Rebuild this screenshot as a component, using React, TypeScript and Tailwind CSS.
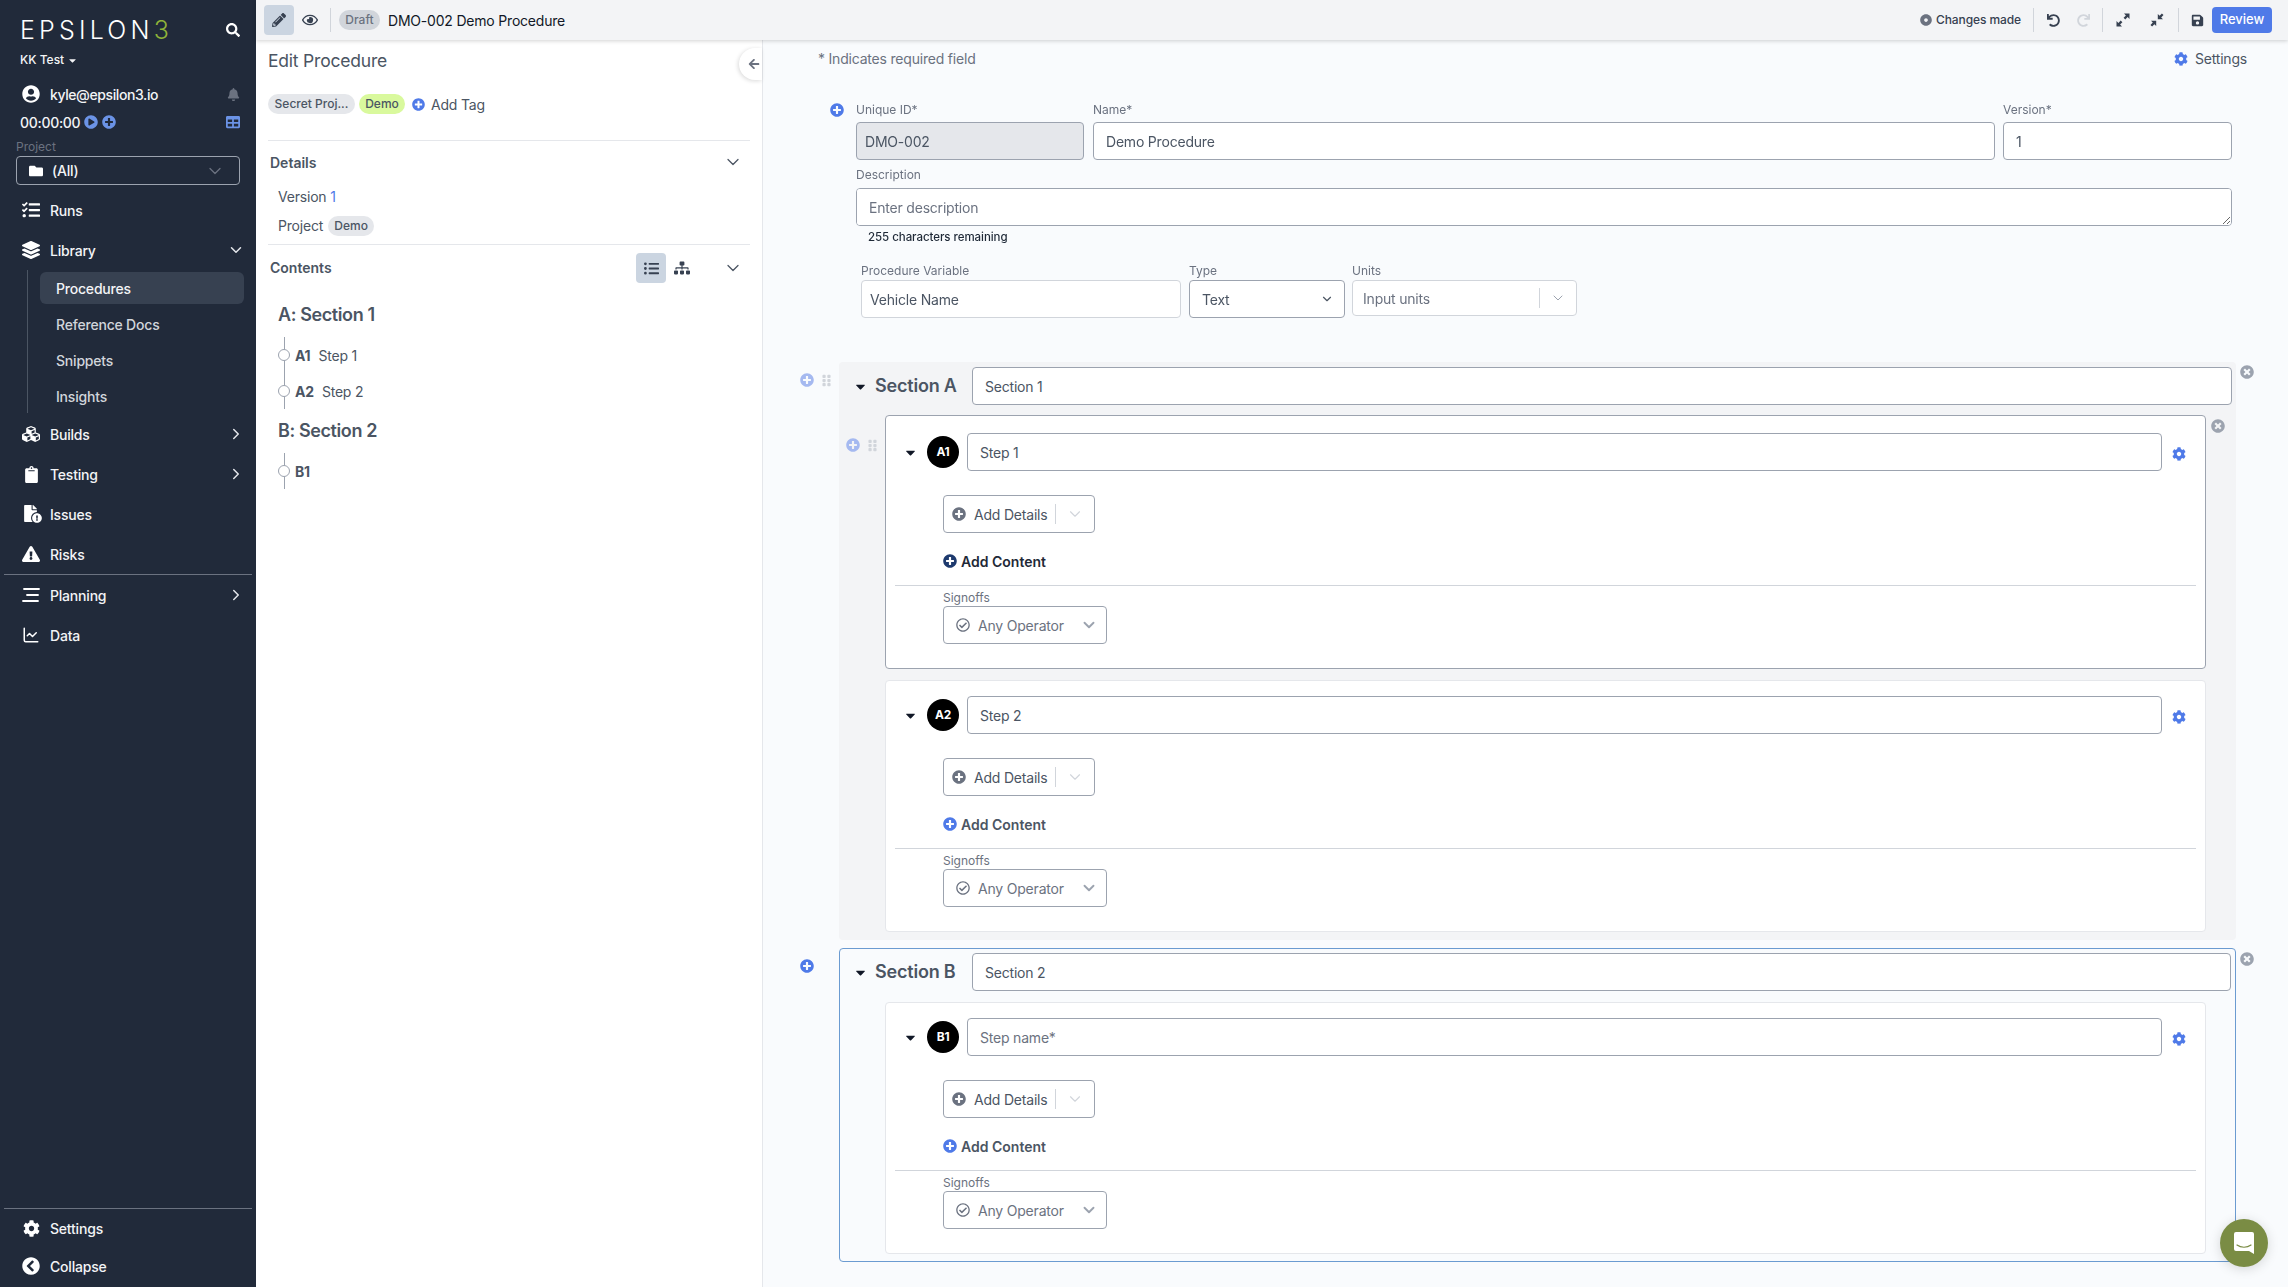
import React from "react";
import {
  FaSearch, FaCaretDown, FaUserCircle, FaBell, FaPlayCircle, FaPlusCircle, FaTable, FaFolder, FaTasks, FaLayerGroup,
  FaCubes, FaClipboard, FaFile, FaExclamationCircle, FaExclamationTriangle, FaCog,
  FaChevronCircleLeft, FaPencilAlt, FaRegEye, FaDotCircle, FaUndo, FaRedo,
  FaSave, FaArrowLeft, FaListUl, FaSitemap, FaTimesCircle, FaGripVertical, FaRegCheckCircle,
} from "react-icons/fa";
import { ChevronDown, ChevronRight, ChartLine } from "lucide-react";

function NavItem({ icon, label, chevron, short }: { icon: React.ReactNode; label: string; chevron?: "down" | "right"; short?: boolean }) {
  return (
    <div className={`flex items-center pl-[22px] pr-[11px] text-[14px] font-medium text-[#f3f4f6] ${short ? "h-[38px]" : "h-[40px]"}`}>
      <span className="flex w-[18px] justify-center text-[18px] text-white">{icon}</span>
      <span className="ml-[10px] flex-1">{label}</span>
      {chevron === "down" && <ChevronDown size={18} strokeWidth={2} className="text-[#e5e7eb]" />}
      {chevron === "right" && <ChevronRight size={18} strokeWidth={2} className="text-[#e5e7eb]" />}
    </div>
  );
}

function PlanningIcon() {
  return (
    <svg width="18" height="16" viewBox="0 0 18 16" stroke="#fff" strokeWidth="1.8" strokeLinecap="round">
      <line x1="2" y1="2" x2="17" y2="2" />
      <line x1="5" y1="8" x2="16" y2="8" />
      <line x1="1" y1="14" x2="16" y2="14" />
    </svg>
  );
}

function ExpandIcon() {
  return (
    <svg width="14" height="14" viewBox="0 0 14 14" fill="#374151">
      <path d="M8 .5h5.5V6l-1.9-1.9-2.3 2.3-1.7-1.7 2.3-2.3z" />
      <path d="M6 13.5H.5V8l1.9 1.9 2.3-2.3 1.7 1.7-2.3 2.3z" />
    </svg>
  );
}

function CompressIcon() {
  return (
    <svg width="14" height="14" viewBox="0 0 14 14" fill="#374151">
      <path d="M7.8 6.2V1l1.8 1.8L11.9.5l1.6 1.6-2.3 2.3L13 6.2z" />
      <path d="M6.2 7.8V13l-1.8-1.8-2.3 2.3-1.6-1.6 2.3-2.3L1 7.8z" />
    </svg>
  );
}

function Sidebar() {
  return (
    <aside className="flex h-full w-[256px] shrink-0 flex-col justify-between bg-[#212a3a] text-white">
      <div>
        <div className="mt-[21px] flex h-[18px] items-center justify-between pl-[20px] pr-[16px]">
          <span className="text-[25px] font-light leading-[18px] tracking-[4.2px] text-white">
            EPSILON<span className="text-[#8fb339]">3</span>
          </span>
          <FaSearch className="text-[14px]" />
        </div>
        <div className="mt-[13px] flex h-[16px] items-center pl-[20px] text-[12px] font-medium tracking-normal text-[#f3f4f6]">
          KK Test <FaCaretDown className="ml-[3px] text-[11px]" />
        </div>
        <div className="mt-[16px] flex h-[20px] items-center pl-[22px] pr-[16px] text-[14px] font-medium tracking-[-0.4px] text-[#f3f4f6]">
          <FaUserCircle className="text-[18px] text-white" />
          <span className="ml-[10px] flex-1">kyle@epsilon3.io</span>
          <FaBell className="text-[13px] text-[#6b7280]" />
        </div>
        <div className="mt-[8px] flex h-[20px] items-center pl-[20px] pr-[16px] text-[14px] font-medium tracking-[-0.3px] text-[#f3f4f6]">
          <span>00:00:00</span>
          <FaPlayCircle className="ml-[4px] text-[14px] text-[#6b93e6]" />
          <FaPlusCircle className="ml-[4px] text-[14px] text-[#6b93e6]" />
          <FaTable className="ml-auto text-[14px] text-[#6b93e6]" />
        </div>
        <div className="mt-[7px] h-[16px] pl-[16px] text-[12px] leading-[16px] tracking-normal text-[#6b7280]">Project</div>
        <div className="mx-[16px] mt-px flex h-[29px] items-center rounded border border-[#9ca3af] pl-[12px] pr-[14px] text-[14px] font-medium text-[#f3f4f6]">
          <FaFolder className="text-[14px] text-white" />
          <span className="ml-[9px] flex-1">(All)</span>
          <ChevronDown size={20} strokeWidth={1.5} className="text-[#6b7280]" />
        </div>
        <nav className="mt-[5px]">
          <NavItem icon={<FaTasks />} label="Runs" />
          <NavItem icon={<FaLayerGroup />} label="Library" chevron="down" />
          <div className="relative h-[144px] pl-[40px] pr-[12px] text-[14px] font-medium text-[#d1d5db]">
            <div className="absolute bottom-px left-[27px] top-0 w-px bg-[#4b5563]" />
            <div className="flex h-[36px] items-center">
              <div className="flex h-[32px] w-full items-center rounded-md bg-[#374151] pl-[16px] text-[#f3f4f6]">Procedures</div>
            </div>
            <div className="flex h-[36px] items-center pl-[16px]">Reference Docs</div>
            <div className="flex h-[36px] items-center pl-[16px]">Snippets</div>
            <div className="flex h-[36px] items-center pl-[16px]">Insights</div>
          </div>
          <NavItem icon={<FaCubes className="text-[20px]" />} label="Builds" chevron="right" />
          <NavItem icon={<FaClipboard className="text-[17px]" />} label="Testing" chevron="right" />
          <NavItem
            icon={
              <span className="relative block h-[18px] w-[18px]">
                <FaFile className="text-[17px]" />
                <span className="absolute -bottom-[1px] -right-[3px] block rounded-full bg-[#212a3a] p-px">
                  <FaExclamationCircle className="text-[10px]" />
                </span>
              </span>
            }
            label="Issues"
          />
          <NavItem icon={<FaExclamationTriangle />} label="Risks" />
          <div className="mx-[4px] h-px bg-[#6b7280]" />
          <NavItem icon={<PlanningIcon />} label="Planning" chevron="right" />
          <NavItem icon={<ChartLine size={18} strokeWidth={2} />} label="Data" />
        </nav>
      </div>
      <div className="pb-[2px]">
        <div className="mx-[4px] h-px bg-[#6b7280]" />
        <NavItem short icon={<FaCog className="text-[17px]" />} label="Settings" />
        <NavItem short icon={<FaChevronCircleLeft />} label="Collapse" />
      </div>
    </aside>
  );
}

function Sep() {
  return <div className="h-[24px] w-px bg-[#d1d5db]" />;
}

function TopBar() {
  return (
    <header className="relative z-10 flex h-[40px] shrink-0 items-center bg-[#f3f4f6] pl-[8px] pr-[16px] shadow-[0_1px_4px_rgba(0,0,0,0.18)]">
      <div className="flex h-[30px] w-[30px] items-center justify-center rounded bg-[#cbd5e1] text-[#374151]">
        <FaPencilAlt className="text-[14px]" />
      </div>
      <FaRegEye className="ml-[8px] text-[16px] text-[#374151]" />
      <div className="ml-[12px]"><Sep /></div>
      <div className="ml-[8px] flex h-[20px] w-[41px] items-center justify-center rounded-full bg-[#d1d5db] text-[12px] font-medium tracking-normal text-[#6b7280]">Draft</div>
      <div className="ml-[8px] text-[14px] text-[#111827]">DMO-002 Demo Procedure</div>
      <div className="ml-auto flex items-center">
        <FaDotCircle className="text-[12px] text-[#6b7280]" />
        <span className="ml-[4px] text-[12px] font-medium tracking-[-0.1px] text-[#374151]">Changes made</span>
        <div className="ml-[12px]"><Sep /></div>
        <FaUndo className="ml-[13px] text-[13px] text-[#374151]" />
        <FaRedo className="ml-[17px] text-[13px] text-[#d1d5db]" />
        <div className="ml-[12px]"><Sep /></div>
        <span className="ml-[13px]"><ExpandIcon /></span>
        <span className="ml-[20px]"><CompressIcon /></span>
        <div className="ml-[14px]"><Sep /></div>
        <FaSave className="ml-[12px] text-[13px] text-[#374151]" />
        <div className="ml-[8px] flex h-[26px] w-[60px] items-center justify-center rounded bg-[#4f7ae8] text-[13px] font-medium tracking-normal text-white">Review</div>
      </div>
    </header>
  );
}

function TreeBlock({ items }: { items: { id: string; name?: string }[] }) {
  return (
    <div className="relative ml-[10px]">
      <div className="absolute bottom-0 left-[6px] top-0 w-px bg-[#9ca3af]" />
      {items.map((it) => (
        <div key={it.id} className="relative flex h-[36px] items-center text-[14px] text-[#4b5563]">
          <span className="h-[12px] w-[12px] rounded-full border border-[#9ca3af] bg-white" />
          <span className="ml-[5px] text-[14px] font-bold">{it.id}</span>
          {it.name && <span className="ml-[8px]">{it.name}</span>}
        </div>
      ))}
    </div>
  );
}

function LeftPanel() {
  return (
    <div className="relative h-full w-[507px] shrink-0 border-r border-[#e5e7eb] bg-white px-[12px] pt-[9px]">
      <div className="absolute right-0 top-[8px] flex h-[32px] w-[23px] items-center justify-end rounded-l-full bg-white pr-[2px] shadow-[-1px_1px_4px_rgba(0,0,0,0.15)]">
        <FaArrowLeft className="text-[12px] text-[#6b7280]" />
      </div>
      <div className="h-[24px] text-[17.5px] leading-[24px] text-[#4b5563]">Edit Procedure</div>
      <div className="mt-[21px] flex h-[20px] items-center">
        <span className="flex h-[20px] w-[87px] items-center justify-center rounded-full bg-[#e5e7eb] text-[12px] font-medium tracking-normal text-[#4b5563]">Secret Proj...</span>
        <span className="ml-[4px] flex h-[20px] w-[46px] items-center justify-center rounded-full bg-[#d9f99d] text-[12px] font-medium tracking-normal text-[#4b5563]">Demo</span>
        <FaPlusCircle className="ml-[7px] text-[13px] text-[#4f7ae8]" />
        <span className="ml-[6px] text-[14px] text-[#4b5563]">Add Tag</span>
      </div>
      <div className="mt-[26px] h-px bg-[#e5e7eb]" />
      <div className="mt-[11px] flex h-[20px] items-center justify-between pl-[2px] pr-[7px]">
        <span className="text-[14px] font-semibold tracking-normal text-[#4b5563]">Details</span>
        <ChevronDown size={20} strokeWidth={1.5} className="text-[#4b5563]" />
      </div>
      <div className="mt-[15px] h-[20px] pl-[10px] text-[14px] leading-[20px] text-[#4b5563]">
        Version <span className="text-[#4f7ae8]">1</span>
      </div>
      <div className="mt-[8px] flex h-[20px] items-center pl-[10px] text-[14px] text-[#4b5563]">
        Project
        <span className="ml-[5px] mt-px flex h-[20px] w-[46px] items-center justify-center rounded-full bg-[#e5e7eb] text-[12px] font-medium tracking-normal">Demo</span>
      </div>
      <div className="mt-[9px] h-px bg-[#e5e7eb]" />
      <div className="mt-[8px] flex h-[30px] items-center pl-[2px] pr-[7px]">
        <span className="flex-1 pb-[2px] text-[14px] font-semibold tracking-normal text-[#4b5563]">Contents</span>
        <div className="flex h-[30px] w-[30px] items-center justify-center rounded bg-[#cbd5e1] text-[#374151]">
          <FaListUl className="text-[15px]" />
        </div>
        <FaSitemap className="ml-[8px] text-[16px] text-[#374151]" />
        <ChevronDown size={20} strokeWidth={1.5} className="ml-[33px] text-[#4b5563]" />
      </div>
      <div className="ml-[10px] mt-[20px] h-[24px] text-[18px] font-semibold leading-[24px] tracking-[-0.4px] text-[#4b5563]">A: Section 1</div>
      <div className="mt-[10px]"><TreeBlock items={[{ id: "A1", name: "Step 1" }, { id: "A2", name: "Step 2" }]} /></div>
      <div className="ml-[10px] mt-[10px] h-[24px] text-[18px] font-semibold leading-[24px] tracking-[-0.4px] text-[#4b5563]">B: Section 2</div>
      <div className="mt-[10px]"><TreeBlock items={[{ id: "B1" }]} /></div>
    </div>
  );
}

function Field({ label, value, className, disabled }: { label: string; value: string; className?: string; disabled?: boolean }) {
  return (
    <div className={className}>
      <div className="mb-[4px] h-[16px] text-[12px] leading-[16px] tracking-normal text-[#6b7280]">{label}</div>
      <input
        readOnly
        value={value}
        className={`h-[38px] w-full rounded border border-[#9ca3af] text-[14px] text-[#4b5563] outline-none ${disabled ? "bg-[#e5e7eb] px-[8px]" : "bg-white px-[12px]"}`}
      />
    </div>
  );
}

function Step({ id, name, placeholder, active, addDark }: { id: string; name?: string; placeholder?: string; active?: boolean; addDark?: boolean }) {
  return (
    <div className={`relative rounded-sm border bg-white pb-[24px] ${active ? "border-[#9ca3af] pt-[17px]" : "border-[#e5e7eb] pt-[15px]"}`}>
      {active && (
        <>
          <div className="absolute -left-[40px] top-[22px] flex items-center">
            <FaPlusCircle className="text-[14px] text-[#a5b9f0]" />
            <FaGripVertical className="ml-[6px] text-[13px] text-[#d1d5db]" />
          </div>
          <FaTimesCircle className="absolute -right-[20px] top-[3px] text-[14px] text-[#9ca3af]" />
        </>
      )}
      <div className="relative flex items-center pl-[17px] pr-[43px]">
        <FaCaretDown className="text-[15px] text-[#111827]" />
        <span className="ml-[9px] flex h-[32px] w-[32px] shrink-0 items-center justify-center rounded-full bg-black text-[12px] font-bold text-white">{id}</span>
        <input
          readOnly
          value={name ?? ""}
          placeholder={placeholder}
          className="ml-[8px] h-[38px] min-w-0 flex-1 rounded border border-[#9ca3af] bg-white px-[12px] text-[14px] text-[#4b5563] outline-none placeholder:text-[#6b7280]"
        />
        <FaCog className="absolute right-[19px] top-[14px] text-[14px] text-[#4f7ae8]" />
      </div>
      <div className="ml-[57px] mt-[24px] flex h-[38px] w-[152px] items-center rounded border border-[#9ca3af] pl-[8px] text-[14px] text-[#4b5563]">
        <FaPlusCircle className="text-[14px] text-[#6b7280]" />
        <span className="ml-[8px]">Add Details</span>
        <span className="ml-[7px] h-[20px] w-px bg-[#d1d5db]" />
        <ChevronDown size={18} strokeWidth={1.5} className="ml-[10px] text-[#d1d5db]" />
      </div>
      <div className="ml-[57px] mt-[18px] flex h-[20px] items-center text-[14px] font-semibold tracking-normal">
        <FaPlusCircle className={`text-[14px] ${addDark ? "text-[#1e3a6e]" : "text-[#4f7ae8]"}`} />
        <span className={`ml-[4px] ${addDark ? "text-[#1f2937]" : "text-[#4b5563]"}`}>Add Content</span>
      </div>
      <div className="mx-[9px] mt-[14px] h-px bg-[#d1d5db]" />
      <div className="ml-[57px] mt-[4px] h-[16px] text-[12px] leading-[16px] tracking-normal text-[#6b7280]">Signoffs</div>
      <div className="ml-[57px] flex h-[38px] w-[164px] items-center rounded border border-[#9ca3af] pl-[12px] pr-[8px] text-[14px] text-[#6b7280]">
        <FaRegCheckCircle className="text-[14px] text-[#6b7280]" />
        <span className="ml-[8px] flex-1">Any Operator</span>
        <ChevronDown size={18} strokeWidth={2.5} className="text-[#9ca3af]" />
      </div>
    </div>
  );
}

function SectionHead({ label, value, bordered }: { label: string; value: string; bordered?: boolean }) {
  return (
    <div className={`flex items-center pr-[4px] ${bordered ? "pl-[13px]" : "pl-[14px]"}`}>
      <FaCaretDown className="text-[15px] text-[#111827]" />
      <span className="ml-[7px] w-[97px] shrink-0 pb-[2px] text-[18px] font-semibold text-[#4b5563]">{label}</span>
      <input
        readOnly
        value={value}
        className="h-[38px] min-w-0 flex-1 rounded border border-[#9ca3af] bg-white px-[12px] text-[14px] text-[#4b5563] outline-none"
      />
    </div>
  );
}

function Main() {
  return (
    <main className="h-full min-w-0 flex-1 overflow-hidden bg-[#f9fbfd]">
      <div className="flex items-center justify-between pl-[55px] pr-[41px] pt-[9px]">
        <span className="text-[14px] leading-[20px] text-[#6b7280]">* Indicates required field</span>
        <span className="flex items-center text-[14px] leading-[20px] text-[#4b5563]">
          <FaCog className="mr-[7px] text-[14px] text-[#4f7ae8]" />
          Settings
        </span>
      </div>
      <div className="relative ml-[93px] mr-[56px] mt-[33px]">
        <FaPlusCircle className="absolute -left-[26px] top-px text-[14px] text-[#4f7ae8]" />
        <div className="flex">
          <Field className="w-[228px]" label="Unique ID*" value="DMO-002" disabled />
          <Field className="ml-[9px] flex-1" label="Name*" value="Demo Procedure" />
          <Field className="ml-[8px] w-[229px]" label="Version*" value="1" />
        </div>
        <div className="mb-[5px] mt-[7px] h-[16px] text-[12px] leading-[16px] tracking-normal text-[#6b7280]">Description</div>
        <textarea
          readOnly
          placeholder="Enter description"
          className="block h-[38px] w-full rounded border border-[#9ca3af] bg-white px-[12px] py-[8px] text-[14px] text-[#4b5563] outline-none placeholder:text-[#6b7280]"
        />
        <div className="mt-[3px] h-[16px] pl-[12px] text-[11.5px] font-medium leading-[16px] tracking-[-0.05px] text-[#1f2937]">255 characters remaining</div>
        <div className="ml-[5px] mt-[18px] flex items-start">
          <div className="w-[320px]">
            <div className="mb-px h-[16px] text-[12px] leading-[16px] tracking-normal text-[#6b7280]">Procedure Variable</div>
            <div className="flex h-[38px] items-center rounded border border-[#d1d5db] bg-white px-[8px] text-[14px] text-[#4b5563]">Vehicle Name</div>
          </div>
          <div className="ml-[8px] w-[156px]">
            <div className="mb-px h-[16px] text-[12px] leading-[16px] tracking-normal text-[#6b7280]">Type</div>
            <div className="flex h-[38px] items-center justify-between rounded border border-[#9ca3af] bg-white pl-[12px] pr-[10px] text-[14px] text-[#4b5563]">
              Text
              <ChevronDown size={14} strokeWidth={2} className="text-[#4b5563]" />
            </div>
          </div>
          <div className="ml-[7px] w-[225px]">
            <div className="mb-px h-[16px] text-[12px] leading-[16px] tracking-normal text-[#6b7280]">Units</div>
            <div className="flex h-[36px] items-center rounded border border-[#d1d5db] bg-white pl-[10px] pr-[10px] text-[14px] text-[#6b7280]">
              <span className="flex-1">Input units</span>
              <span className="h-[20px] w-px bg-[#d1d5db]" />
              <ChevronDown size={16} strokeWidth={1.5} className="ml-[10px] text-[#9ca3af]" />
            </div>
          </div>
        </div>
      </div>
      <div className="ml-[76px] mr-[52px] mt-[44px]">
        <div className="relative rounded bg-[#f3f4f6] pb-[8px] pt-[5px]">
          <div className="absolute -left-[39px] top-[11px] flex items-center">
            <FaPlusCircle className="text-[14px] text-[#a5b9f0]" />
            <FaGripVertical className="ml-[6px] text-[13px] text-[#d1d5db]" />
          </div>
          <FaTimesCircle className="absolute -right-[18px] top-[3px] text-[14px] text-[#9ca3af]" />
          <SectionHead label="Section A" value="Section 1" />
          <div className="ml-[46px] mr-[30px] mt-[10px] flex flex-col gap-[11px]">
            <Step id="A1" name="Step 1" active addDark />
            <Step id="A2" name="Step 2" />
          </div>
        </div>
        <div className="relative mt-[8px] rounded border border-[#6b9bd1] pb-[7px] pt-[4px]">
          <FaPlusCircle className="absolute -left-[40px] top-[10px] text-[14px] text-[#4f7ae8]" />
          <FaTimesCircle className="absolute -right-[19px] top-[3px] text-[14px] text-[#9ca3af]" />
          <SectionHead bordered label="Section B" value="Section 2" />
          <div className="ml-[45px] mr-[29px] mt-[11px]">
            <Step id="B1" placeholder="Step name*" />
          </div>
        </div>
      </div>
    </main>
  );
}

function ChatBubble() {
  return (
    <div className="fixed bottom-[20px] right-[20px] z-20 flex h-[48px] w-[48px] items-center justify-center rounded-full bg-[#7a8c44] shadow-[0_2px_12px_rgba(0,0,0,0.15)]">
      <svg width="22" height="24" viewBox="0 0 22 24">
        <path d="M3 1h16a2 2 0 0 1 2 2v20l-5-3H3a2 2 0 0 1-2-2V3a2 2 0 0 1 2-2z" fill="#fff" />
        <path d="M4 14c4 3 10 3 14 0" stroke="#7a8c44" strokeWidth="1.2" fill="none" strokeLinecap="round" />
      </svg>
    </div>
  );
}

export default function App() {
  return (
    <div className="flex h-screen w-full overflow-hidden font-[Inter,sans-serif] tracking-[-0.2px]">
      <Sidebar />
      <div className="flex h-full min-w-0 flex-1 flex-col">
        <TopBar />
        <div className="flex min-h-0 flex-1">
          <LeftPanel />
          <Main />
        </div>
      </div>
      <ChatBubble />
    </div>
  );
}
